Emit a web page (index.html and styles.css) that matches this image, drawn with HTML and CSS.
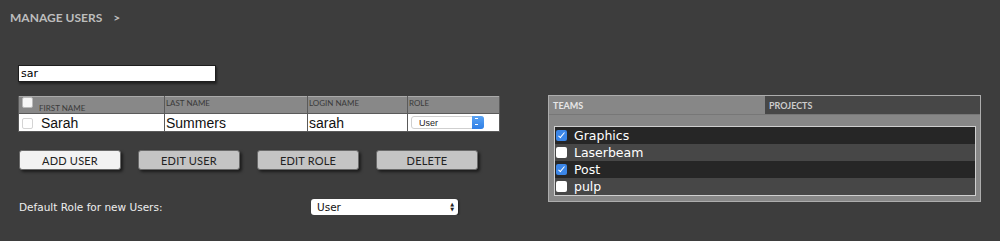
FILE: index.html
```html
<!DOCTYPE html>
<html lang="en">
<head>
    <meta charset="UTF-8">
    <title>Manage Users</title>
    <link rel="stylesheet" href="styles.css">
</head>
<body>
    <div class="crumb">MANAGE USERS <span class="arrow">&gt;</span></div>

    <div class="main">
        <div class="users">
            <input class="search" type="text" value="sar">

            <table class="grid">
                <tr class="head">
                    <th class="c1"><input type="checkbox"> <span class="low">FIRST NAME</span></th>
                    <th class="c2">LAST NAME</th>
                    <th class="c3">LOGIN NAME</th>
                    <th class="c4">ROLE</th>
                </tr>
                <tr class="row">
                    <td><input type="checkbox" class="faint"> Sarah</td>
                    <td>Summers</td>
                    <td>sarah</td>
                    <td><div class="role">User<span class="spin"></span></div></td>
                </tr>
            </table>

            <div class="buttons">
                <button class="btn light">ADD USER</button>
                <button class="btn">EDIT USER</button>
                <button class="btn">EDIT ROLE</button>
                <button class="btn">DELETE</button>
            </div>

            <div class="default">
                <label>Default Role for new Users:</label>
                <div class="pick">User<span class="updown">&#9650;<br>&#9660;</span></div>
            </div>
        </div>

        <div class="panel">
            <div class="tabs">
                <div class="tab on">TEAMS</div>
                <div class="tab">PROJECTS</div>
            </div>
            <div class="body">
                <ul class="teams">
                    <li><input type="checkbox" checked> Graphics</li>
                    <li><input type="checkbox"> Laserbeam</li>
                    <li><input type="checkbox" checked> Post</li>
                    <li><input type="checkbox"> pulp</li>
                </ul>
            </div>
        </div>
    </div>
</body>
</html>
```

FILE: styles.css
```css
body {
    margin: 0;
    background: #3d3d3d;
    font-family: "Liberation Sans", Arial, sans-serif;
}
.crumb {
    padding: 11px 10px;
    font-family: "Lato", "Liberation Sans", sans-serif;
    font-size: 12px;
    font-weight: bold;
    line-height: 14px;
    color: #bdbdbd;
}
.crumb .arrow {
    margin-left: 8px;
}
.main {
    display: flex;
    padding: 29px 0 0 18px;
}
.users {
    width: 482px;
}
.search {
    display: block;
    box-sizing: border-box;
    width: 198px;
    height: 17px;
    margin: 0;
    padding: 0 2px;
    border: 1px solid #1e1e1e;
    box-shadow: 1px 2px 2px rgba(0, 0, 0, 0.45);
    font-size: 11px;
    font-family: "DejaVu Sans", sans-serif;
    color: #000;
}
.grid {
    margin-top: 14px;
    width: 482px;
    border: 1px solid #aaa;
    border-collapse: collapse;
    background: #888;
}
.grid th {
    height: 16px;
    padding: 0 1px;
    border: 1px solid #5a5a5a;
    border-top: 0;
    text-align: left;
    vertical-align: top;
    font-family: "Lato", "Liberation Sans", sans-serif;
    font-size: 8px;
    font-weight: normal;
    color: #3a3a3a;
    line-height: 12px;
}
.grid th.c1 { width: 142px; padding-left: 2px; }
.grid th.c2 { width: 140px; }
.grid th.c3 { width: 97px; }
.grid th .low {
    position: relative;
    top: 5px;
}
.grid td {
    height: 17px;
    padding: 0 1px;
    border: 1px solid #5a5a5a;
    background: #fff;
    font-size: 14px;
    color: #111;
    line-height: 16px;
    vertical-align: middle;
}
.grid td:first-child {
    padding-left: 3px;
}
.grid input[type=checkbox] {
    appearance: none;
    width: 11px;
    height: 11px;
    margin: 0 4px 0 1px;
    vertical-align: top;
    border: 1px solid #bbb;
    border-radius: 2px;
    background: #f7f7f7;
}
.grid .row input[type=checkbox] {
    margin: 0 4px 0 0;
    vertical-align: -1px;
    border-color: #d4d4d4;
    background: #fff;
}
.role {
    position: relative;
    width: 73px;
    height: 13px;
    margin-left: 2px;
    padding-left: 7px;
    box-sizing: border-box;
    border: 1px solid #cfcfcf;
    border-radius: 3px;
    font-size: 9px;
    line-height: 12px;
    color: #222;
}
.role .spin {
    position: absolute;
    right: -1px;
    top: -1px;
    width: 12px;
    height: 13px;
    border-radius: 0 3px 3px 0;
    background: linear-gradient(#5aa3f3, #2f7fe6);
}
.role .spin::after {
    content: "";
    position: absolute;
    left: 3px;
    top: 2px;
    width: 3px;
    height: 5px;
    border: 1px solid #fff;
    border-left: 0;
    border-right: 0;
}
.buttons {
    display: flex;
    gap: 17px;
    margin-top: 18px;
    padding-left: 1px;
}
.btn {
    width: 102px;
    height: 20px;
    padding: 0;
    border: 1px solid #6a6a6a;
    border-radius: 3px;
    background: #c4c4c4;
    box-shadow: 2px 2px 3px rgba(0, 0, 0, 0.55);
    font-family: "Lato", "Liberation Sans", sans-serif;
    font-size: 11px;
    color: #222;
    letter-spacing: 0.2px;
}
.btn.light {
    background: #f2f2f2;
}
.default {
    display: flex;
    align-items: center;
    margin-top: 29px;
    padding-left: 1px;
}
.default label {
    width: 292px;
    font-family: "DejaVu Sans", sans-serif;
    font-size: 10.5px;
    color: #eee;
}
.pick {
    position: relative;
    width: 147px;
    height: 16px;
    box-sizing: border-box;
    padding-left: 6px;
    border-radius: 3px;
    background: #fff;
    box-shadow: 1px 1px 2px rgba(0, 0, 0, 0.5);
    font-family: "DejaVu Sans", sans-serif;
    font-size: 10.5px;
    line-height: 16px;
    color: #111;
}
.pick .updown {
    position: absolute;
    right: 4px;
    top: 3px;
    font-size: 5px;
    line-height: 5px;
    color: #222;
}
.panel {
    width: 433px;
    height: 107px;
    margin: 30px 0 0 48px;
    box-sizing: border-box;
    border: 1px solid #adadad;
    background: #878787;
}
.tabs {
    display: flex;
    height: 18px;
    border-bottom: 1px solid #777;
}
.tab {
    flex: 1;
    padding: 4px 4px 0;
    font-family: "Lato", "Liberation Sans", sans-serif;
    font-size: 9px;
    font-weight: bold;
    color: #ccc;
    background: #474747;
}
.tab.on {
    flex: 0 0 208px;
    background: #878787;
    color: #e6e6e6;
}
.body {
    padding: 11px 4px 0 5px;
}
.teams {
    margin: 0;
    padding: 0;
    list-style: none;
    border: 1px solid #cfcfcf;
}
.teams li {
    height: 17px;
    padding-left: 1px;
    background: #474747;
    color: #fff;
    font-family: "DejaVu Sans", sans-serif;
    font-size: 12.5px;
    line-height: 17px;
}
.teams li:nth-child(odd) {
    background: #262626;
}
.teams input[type=checkbox] {
    appearance: none;
    position: relative;
    width: 11px;
    height: 11px;
    margin: 0 3px 0 0;
    vertical-align: -1px;
    border-radius: 2px;
    background: #fff;
}
.teams input[type=checkbox]:checked {
    background: #3b86e8;
}
.teams input[type=checkbox]:checked::after {
    content: "";
    position: absolute;
    left: 4px;
    top: 1px;
    width: 2px;
    height: 6px;
    border: solid #fff;
    border-width: 0 1px 1px 0;
    transform: rotate(40deg);
}
```
